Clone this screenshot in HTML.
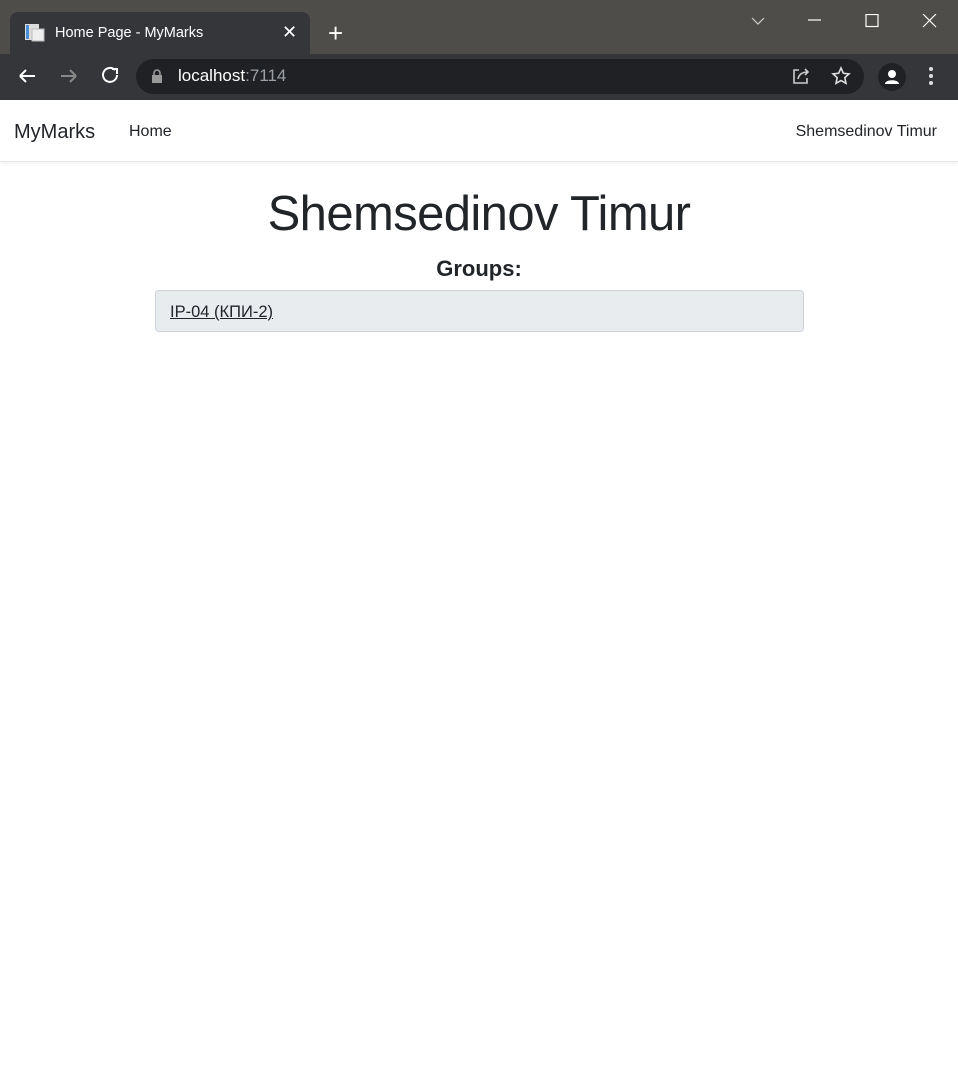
<!DOCTYPE html>
<html><head><meta charset="utf-8"><style>
*{margin:0;padding:0;box-sizing:border-box}
body{width:958px;height:1079px;background:#fff;font-family:"Liberation Sans",sans-serif;position:relative;overflow:hidden}
.top{position:absolute;left:0;top:0;width:958px;height:54px;background:#4f4d4a}
.tab{position:absolute;left:10px;top:12px;width:300px;height:42px;background:#35363a;border-radius:8px 8px 0 0}
.bar{position:absolute;left:0;top:54px;width:958px;height:46px;background:#35363a}
.url{position:absolute;left:136px;top:59px;width:728px;height:35px;background:#202124;border-radius:18px}
.w{color:#fff;position:absolute}
.nav{position:absolute;top:100px;left:0;width:958px;height:62px;border-bottom:1px solid #e5e5e5;box-shadow:0 2px 4px rgba(0,0,0,.05)}
</style></head><body>
<div class="top"></div>
<div class="tab"></div>
<svg style="position:absolute;left:24px;top:22px" width="22" height="20"><rect x="1" y="2" width="14" height="16" fill="#ddd"/><rect x="2" y="3" width="3" height="14" fill="#4a90d9"/><rect x="8" y="7" width="12" height="12" fill="#eee" stroke="#bbb"/></svg>
<div class="w" style="left:55px;top:25px;font-size:14.5px">Home Page - MyMarks</div>
<div class="w" style="left:282px;top:22px;font-size:18px">✕</div>
<div class="w" style="left:328px;top:18px;font-size:26px;font-weight:300">+</div>
<svg style="position:absolute;left:750px;top:14px" width="200" height="14" stroke="#fff" fill="none" stroke-width="1.2"><path d="M2 4l6 6 6-6" stroke="#ccc"/><path d="M58 6h13"/><rect x="116" y="0.5" width="12" height="12"/><path d="M173 0l13 13M186 0l-13 13"/></svg>
<div class="bar"></div>
<div class="url"></div>
<svg style="position:absolute;left:16px;top:66px" width="110" height="20" fill="none" stroke-width="2"><path d="M4 10h15M4 10l6-6M4 10l6 6" stroke="#fff"/><path d="M60 10h-15M60 10l-6-6M60 10l-6 6" stroke="#888"/><path d="M99 4a7 7 0 1 0 2 5" stroke="#fff"/><path d="M96 3h5v5" stroke="#fff"/></svg>
<svg style="position:absolute;left:151px;top:68px" width="12" height="16"><rect x="1" y="7" width="10" height="8" fill="#999"/><path d="M3 7V5a3 3 0 0 1 6 0v2" stroke="#999" stroke-width="1.6" fill="none"/></svg>
<div style="position:absolute;left:178px;top:66px;font-size:17px;color:#fff">localhost<span style="color:#9aa0a6">:7114</span></div>
<svg style="position:absolute;left:791px;top:66px" width="20" height="20" fill="none" stroke="#ccc" stroke-width="1.6"><path d="M8 4H3v13h13v-5"/><path d="M7 13c1-5 5-7 10-7M14 3l3 3-3 3"/></svg>
<svg style="position:absolute;left:831px;top:66px" width="20" height="20" fill="none" stroke="#ddd" stroke-width="1.6"><path d="M10 2l2.4 5.3 5.6.6-4.2 3.8 1.2 5.6L10 14.5 5 17.3l1.2-5.6L2 7.9l5.6-.6z"/></svg>
<div style="position:absolute;left:878px;top:63px;width:28px;height:28px;border-radius:50%;background:#202124"><svg width="28" height="28"><circle cx="14" cy="11" r="4" fill="#fff"/><path d="M7 21c0-5 14-5 14 0z" fill="#fff"/></svg></div>
<div style="position:absolute;left:929px;top:67px;width:4px"><div style="width:4px;height:4px;border-radius:2px;background:#ddd;margin-bottom:3px"></div><div style="width:4px;height:4px;border-radius:2px;background:#ddd;margin-bottom:3px"></div><div style="width:4px;height:4px;border-radius:2px;background:#ddd"></div></div>
<div class="nav"></div>
<div style="position:absolute;left:14px;top:121px;font-size:20px;color:#212529">MyMarks</div>
<div style="position:absolute;left:129px;top:123px;font-size:16px;color:#212529">Home</div>
<div style="position:absolute;right:21px;top:123px;font-size:16px;color:#212529">Shemsedinov Timur</div>
<div style="position:absolute;left:0;width:958px;text-align:center;top:186px;font-size:49px;font-weight:300;color:#212529;letter-spacing:-0.6px">Shemsedinov Timur</div>
<div style="position:absolute;left:0;width:958px;text-align:center;top:256px;font-size:22px;font-weight:bold;color:#212529">Groups:</div>
<div style="position:absolute;left:155px;top:290px;width:649px;height:42px;background:#e9ecef;border:1px solid #ced4da;border-radius:4px"></div>
<div style="position:absolute;left:170px;top:303px;font-size:16.5px;color:#212529;text-decoration:underline">IP-04 (КПИ-2)</div>
</body></html>
